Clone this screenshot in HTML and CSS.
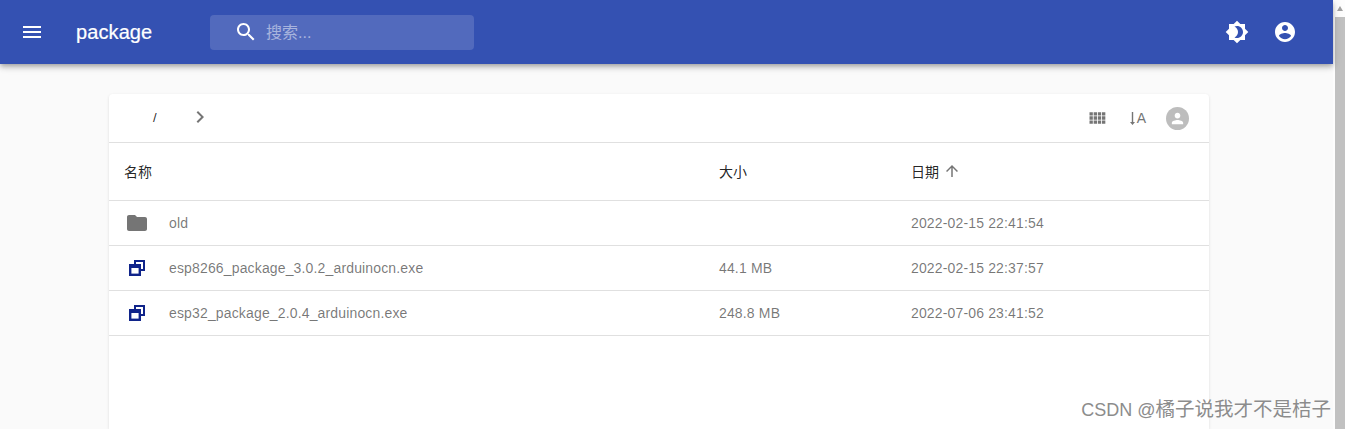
FILE: index.html
```html
<!DOCTYPE html>
<html lang="zh">
<head>
<meta charset="UTF-8">
<meta name="viewport" content="width=device-width, initial-scale=1.0">
<title>package</title>
<link rel="stylesheet" href="styles.css">
</head>
<body>
<div class="window">
    <div class="page">
        <header class="app-bar">
            <svg class="icon menu-icon" viewBox="0 0 24 24"><path d="M3 18h18v-2H3v2zm0-5h18v-2H3v2zm0-7v2h18V6H3z"/></svg>
            <div class="app-title">package</div>
            <div class="search">
                <svg class="icon" viewBox="0 0 24 24"><path d="M15.5 14h-.79l-.28-.27C15.41 12.59 16 11.11 16 9.5 16 5.91 13.09 3 9.5 3S3 5.91 3 9.5 5.91 16 9.5 16c1.61 0 3.09-.59 4.23-1.57l.27.28v.79l5 4.99L20.49 19l-4.99-5zm-6 0C7.01 14 5 11.99 5 9.5S7.01 5 9.5 5 14 7.01 14 9.5 11.99 14 9.5 14z"/></svg>
                <span class="search-text">搜索...</span>
            </div>
            <div class="bar-actions">
                <svg class="icon" viewBox="0 0 24 24"><path d="M20 8.69V4h-4.69L12 .69 8.69 4H4v4.69L.69 12 4 15.31V20h4.69L12 23.31 15.31 20H20v-4.69L23.31 12 20 8.69zM12 18c-.89 0-1.74-.2-2.5-.55C11.56 16.5 13 14.42 13 12s-1.44-4.5-3.5-5.45C10.26 6.2 11.11 6 12 6c3.31 0 6 2.69 6 6s-2.69 6-6 6z"/></svg>
                <svg class="icon" viewBox="0 0 24 24"><path d="M12 2C6.48 2 2 6.48 2 12s4.48 10 10 10 10-4.48 10-10S17.52 2 12 2zm0 3c1.66 0 3 1.34 3 3s-1.34 3-3 3-3-1.34-3-3 1.34-3 3-3zm0 14.2c-2.5 0-4.71-1.28-6-3.22.03-1.99 4-3.08 6-3.08 1.99 0 5.97 1.09 6 3.08-1.29 1.94-3.5 3.22-6 3.22z"/></svg>
            </div>
        </header>

        <main class="content">
            <section class="card">
                <div class="toolbar">
                    <div class="crumbs">
                        <span class="crumb-root">/</span>
                        <svg class="icon grey" viewBox="0 0 24 24"><path d="M10 6L8.59 7.41 13.17 12l-4.58 4.59L10 18l6-6z"/></svg>
                    </div>
                    <div class="tools">
                        <svg class="icon-small grey" viewBox="0 0 24 24"><path d="M3 9h4V5H3v4zm0 5h4v-4H3v4zm5 0h4v-4H8v4zm5 0h4v-4h-4v4zM8 9h4V5H8v4zm5-4v4h4V5h-4zm5 9h4v-4h-4v4zM3 19h4v-4H3v4zm5 0h4v-4H8v4zm5 0h4v-4h-4v4zm5 0h4v-4h-4v4zm0-14v4h4V5h-4z"/></svg>
                        <div class="sort-alpha">
                            <svg class="sort-arrow grey" viewBox="0 0 5 13"><path d="M1.8 0h1.4v10H5l-2.5 3L0 10h1.8z"/></svg>
                            <span>A</span>
                        </div>
                        <div class="avatar">
                            <svg viewBox="0 0 24 24"><path d="M12 12c2.21 0 4-1.79 4-4s-1.79-4-4-4-4 1.79-4 4 1.79 4 4 4zm0 2c-2.67 0-8 1.34-8 4v2h16v-2c0-2.66-5.33-4-8-4z"/></svg>
                        </div>
                    </div>
                </div>

                <div class="row head">
                    <div class="head-name">名称</div>
                    <div>大小</div>
                    <div class="head-date">日期
                        <svg class="sort-up grey" viewBox="0 0 24 24"><path d="M4 12l1.41 1.41L11 7.83V20h2V7.83l5.58 5.59L20 12l-8-8-8 8z"/></svg>
                    </div>
                </div>

                <div class="row file">
                    <svg class="icon folder" viewBox="0 0 24 24"><path d="M10 4H4c-1.1 0-1.99.9-1.99 2L2 18c0 1.1.9 2 2 2h16c1.1 0 2-.9 2-2V8c0-1.1-.9-2-2-2h-8l-2-2z"/></svg>
                    <div class="name">old</div>
                    <div></div>
                    <div>2022-02-15 22:41:54</div>
                </div>
                <div class="row file">
                    <svg class="exe-icon" viewBox="0 0 16 16"><path class="exe-back" d="M6 4V1h9v9h-3"/><rect class="exe-front" x="1.2" y="5.2" width="9.6" height="9.6"/><rect class="exe-title" x="1" y="5" width="10" height="3"/></svg>
                    <div class="name">esp8266_package_3.0.2_arduinocn.exe</div>
                    <div>44.1 MB</div>
                    <div>2022-02-15 22:37:57</div>
                </div>
                <div class="row file">
                    <svg class="exe-icon" viewBox="0 0 16 16"><path class="exe-back" d="M6 4V1h9v9h-3"/><rect class="exe-front" x="1.2" y="5.2" width="9.6" height="9.6"/><rect class="exe-title" x="1" y="5" width="10" height="3"/></svg>
                    <div class="name">esp32_package_2.0.4_arduinocn.exe</div>
                    <div>248.8 MB</div>
                    <div>2022-07-06 23:41:52</div>
                </div>
            </section>
        </main>
    </div>

    <div class="scrollbar">
        <div class="scroll-up"></div>
        <div class="scroll-thumb"></div>
    </div>

    <div class="watermark"><span class="watermark-name">CSDN @</span>橘子说我才不是桔子</div>
</div>
</body>
</html>
```

FILE: styles.css
```css
body, html {
    height: 100%;
    margin: 0;
    overflow: hidden;
    font-family: "Liberation Sans", "Noto Sans CJK SC", sans-serif;
}
.window {
    display: flex;
    height: 429px;
    overflow: hidden;
}
.page {
    flex: 1;
    min-width: 0;
    display: flex;
    flex-direction: column;
    background-color: #fafafa;
}
.icon {
    width: 24px;
    height: 24px;
    fill: currentColor;
    flex: none;
}
.icon-small {
    width: 20px;
    height: 20px;
    flex: none;
}
.grey {
    fill: #757575;
}

/* top bar */
.app-bar {
    height: 64px;
    flex: none;
    display: flex;
    align-items: center;
    padding: 0 36px 0 20px;
    background-color: #3451b2;
    color: white;
    box-shadow: 0 2px 4px -1px rgba(0,0,0,.2), 0 4px 5px 0 rgba(0,0,0,.14), 0 1px 10px 0 rgba(0,0,0,.12);
    position: relative;
}
.app-title {
    margin-left: 32px;
    width: 134px;
    font-size: 20px;
    letter-spacing: .1px;
    -webkit-text-stroke: .2px white;
}
.search {
    width: 264px;
    height: 35px;
    display: flex;
    align-items: center;
    padding-left: 24px;
    box-sizing: border-box;
    border-radius: 4px;
    background-color: rgba(255,255,255,.15);
}
.search-text {
    margin-left: 8px;
    margin-top: -2px;
    font-size: 16px;
    color: rgba(255,255,255,.5);
}
.bar-actions {
    margin-left: auto;
    display: flex;
    gap: 24px;
}

/* file list */
.content {
    flex: 1;
    min-height: 0;
    padding: 30px 124px 0 109px;
}
.card {
    height: 100%;
    background-color: white;
    border-radius: 4px 4px 0 0;
    box-shadow: 0 1px 3px rgba(0,0,0,.12);
}
.toolbar {
    height: 48px;
    display: flex;
    align-items: center;
    justify-content: space-between;
    padding: 0 20px 0 44px;
    border-bottom: 1px solid #e0e0e0;
}
.crumbs {
    display: flex;
    align-items: center;
    gap: 31px;
    margin-top: -2px;
}
.crumb-root {
    font-size: 13px;
    color: rgba(0,0,0,.87);
}
.tools {
    display: flex;
    align-items: center;
}
.sort-alpha {
    display: flex;
    align-items: center;
    gap: 2px;
    margin-left: 23px;
    margin-right: 20px;
    font-size: 14px;
    color: #757575;
}
.sort-arrow {
    width: 5px;
    height: 13px;
}
.avatar {
    width: 23px;
    height: 23px;
    border-radius: 50%;
    background-color: #bdbdbd;
    display: flex;
    align-items: center;
    justify-content: center;
}
.avatar svg {
    width: 17px;
    height: 17px;
    fill: white;
}
.row {
    display: grid;
    grid-template-columns: 60px 550px 192px 1fr;
    align-items: center;
    border-bottom: 1px solid #e0e0e0;
}
.head {
    height: 55px;
    padding-bottom: 2px;
    grid-template-columns: 610px 192px 1fr;
    font-size: 14px;
    color: rgba(0,0,0,.87);
}
.head-name {
    padding-left: 15px;
}
.head-date {
    display: flex;
    align-items: center;
    gap: 4px;
}
.sort-up {
    width: 18px;
    height: 18px;
}
.file {
    height: 44px;
    font-size: 14px;
    letter-spacing: .15px;
    color: rgba(0,0,0,.54);
}
.folder {
    margin-left: 16px;
    fill: #757575;
}
.exe-icon {
    width: 16px;
    height: 16px;
    margin-left: 20px;
}
.exe-back,
.exe-front {
    fill: none;
    stroke: #10248a;
    stroke-width: 2;
}
.exe-front {
    stroke-width: 2.4;
}
.exe-title {
    fill: #10248a;
}

/* browser scrollbar */
.scrollbar {
    width: 12px;
    flex: none;
    display: flex;
    flex-direction: column;
    align-items: flex-end;
    background-color: #fdfdfd;
}
.scroll-up {
    width: 0;
    height: 0;
    margin: 6px 2px 6px 0;
    border-left: 3.5px solid transparent;
    border-right: 3.5px solid transparent;
    border-bottom: 5px solid #a3a3a3;
}
.scroll-thumb {
    width: 10px;
    flex: 1;
    background-color: #c1c1c1;
}

.watermark {
    position: absolute;
    right: 14px;
    top: 396px;
    font-size: 19.5px;
    line-height: 26px;
    color: #8c8c8c;
    text-shadow: 0 0 2px white;
}
.watermark-name {
    font-size: 18px;
}
```
